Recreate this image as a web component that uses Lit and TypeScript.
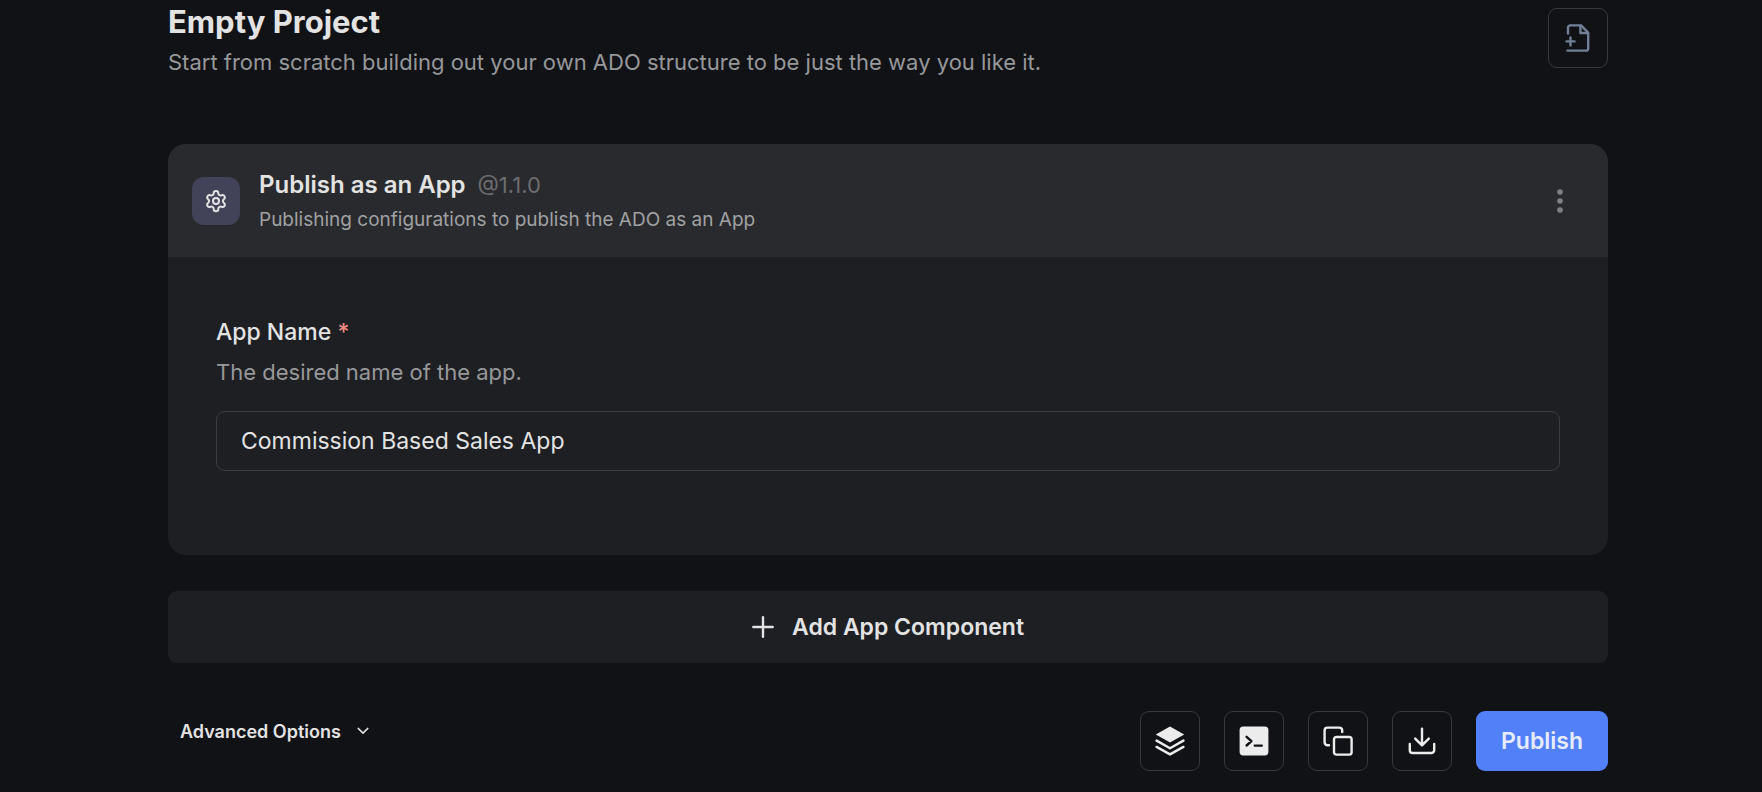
import { LitElement, html, css, svg } from "lit";
import { customElement, state } from "lit/decorators.js";

const filePlusIcon = svg`<svg class="icon slate" viewBox="0 0 30 30" width="30" height="30" aria-hidden="true">
  <path class="bold" d="M5 10.500V4.600A2.200 2.200 0 0 1 7.200 2.400H18L25.200 9.600V25.400A2.200 2.200 0 0 1 23 27.600H4.400" />
  <path class="bold" d="M17.400 2.800V10H24.800" /><path class="bold" d="M7.500 14.400V22.400M3.500 18.400H11.500" />
</svg>`;

const gearIcon = svg`<svg class="icon" viewBox="0 0 24 24" width="24" height="24" aria-hidden="true">
  <circle cx="12" cy="12" r="3" />
  <path d="M9.7 4.2a2.3 2.3 0 0 1 4.6 0 2.3 2.3 0 0 0 3.4 2 2.3 2.3 0 0 1 2.3 3.9 2.3 2.3 0 0 0 0 3.9 2.3 2.3 0 0 1-2.3 3.9 2.3 2.3 0 0 0-3.4 2 2.3 2.3 0 0 1-4.6 0 2.3 2.3 0 0 0-3.4-2A2.3 2.3 0 0 1 4 14a2.3 2.3 0 0 0 0-3.9 2.3 2.3 0 0 1 2.3-3.9 2.3 2.3 0 0 0 3.4-2" />
</svg>`;

const dotsIcon = svg`<svg class="dots" viewBox="0 0 6 24" width="6" height="24" aria-hidden="true">
  <circle cx="3" cy="3" r="2.8" /><circle cx="3" cy="12" r="2.8" /><circle cx="3" cy="21" r="2.8" />
</svg>`;

const plusIcon = svg`<svg class="icon" viewBox="0 0 22 22" width="22" height="22" aria-hidden="true">
  <path class="bold" d="M11 1.300v19.400M1.300 11h19.400" />
</svg>`;

const chevronIcon = svg`<svg class="icon" viewBox="0 0 12 8" width="12" height="8" aria-hidden="true">
  <path class="thin" d="M1.2 1.4 6 6.1l4.8-4.7" />
</svg>`;

const layersIcon = svg`<svg class="icon" viewBox="0 0 30 30" width="30" height="30" aria-hidden="true">
  <path class="solid" d="M15 .6 29.2 8.4 15 16.6.8 8.4Z" />
  <path class="bold" d="M1.600 14.600 15 22.200l13.400-7.600M1.600 20.900 15 28.400l13.400-7.500" />
</svg>`;

const terminalIcon = svg`<svg class="icon" viewBox="0 0 30 30" width="30" height="30" aria-hidden="true">
  <rect class="solid" x=".6" y=".6" width="28.8" height="28.8" rx="3.6" />
  <path class="cut" d="m7.600 10.800 4.800 4.300-4.800 4.400M15.800 19.600h7" />
</svg>`;

const copyIcon = svg`<svg class="icon" viewBox="0 0 30 30" width="30" height="30" aria-hidden="true">
  <rect class="bold" x="11" y="11" width="17.6" height="17.6" rx="2.4" />
  <path class="bold" d="M6 19.200H4.400A2.800 2.800 0 0 1 1.600 16.400V4.400A2.800 2.800 0 0 1 4.400 1.600H16.400A2.800 2.800 0 0 1 19.200 4.400V6" />
</svg>`;

const downloadIcon = svg`<svg class="icon" viewBox="0 0 30 30" width="30" height="30" aria-hidden="true">
  <path class="bold" d="M15 2.600v16.400M8.200 12.600l6.800 6.800 6.800-6.800M2.800 18v6.200a2.800 2.800 0 0 0 2.800 2.800h18.800a2.800 2.800 0 0 0 2.800-2.800V18" />
</svg>`;

@customElement("app-root")
export class AppRoot extends LitElement {
  static styles = css`
    :host {
      display: block;
      min-height: 100vh;
      box-sizing: border-box;
      padding: 4px 154px 20px 168px;
      background: #111216;
      color: #e3e3e3;
      font-family: Inter, "Liberation Sans", sans-serif;
    }
    h1, h2, p { margin: 0; }
    button, input { font: inherit; color: inherit; box-sizing: border-box; }
    button {
      display: flex;
      align-items: center;
      justify-content: center;
      padding: 0;
      border: 0;
      background: none;
      cursor: pointer;
    }
    .icon {
      fill: none;
      stroke: currentColor;
      stroke-width: 2;
      stroke-linecap: round;
      stroke-linejoin: round;
    }
    .slate { color: #718096; }
    .solid { fill: currentColor; stroke: none; }
    .thin { stroke-width: 1.5; }
    .bold { stroke-width: 2.4; }
    .cut { stroke: #111216; stroke-width: 2.4; }
    .top {
      display: flex;
      justify-content: space-between;
      align-items: flex-start;
      margin-bottom: 66px;
    }
    .stack { display: flex; flex-direction: column; gap: 6px; }
    h1 { font-size: 31px; line-height: 36px; font-weight: 700; }
    .muted { color: #97989a; font-size: 22px; line-height: 32px; }
    .square {
      width: 60px;
      height: 60px;
      border: 1px solid #38393c;
      border-radius: 9px;
    }
    .top .square { margin-top: 4px; }
    .card { border-radius: 18px; overflow: hidden; background: #1e1f23; }
    .card-head {
      display: flex;
      align-items: center;
      gap: 19px;
      padding: 24px;
      background: #292a2d;
    }
    .card-head .stack { flex: 1; padding-top: 2px; }
    .badge {
      display: grid;
      place-items: center;
      width: 48px;
      height: 48px;
      border-radius: 12px;
      background: #424358;
    }
    .title { display: flex; gap: 12px; font-size: 24px; line-height: 30px; }
    h2 { font-size: inherit; font-weight: 600; }
    .version { color: #6c6d70; font-size: 22px; }
    .small { color: #a0a1a3; font-size: 19px; line-height: 27px; }
    .menu { width: 48px; height: 48px; }
    .dots { fill: #808184; }
    .card-body { display: flex; flex-direction: column; padding: 60px 48px 84px; }
    label { font-size: 23px; line-height: 30px; font-weight: 500; margin-bottom: 9px; }
    .star { color: #f08a80; }
    input {
      width: 100%;
      height: 60px;
      margin-top: 23px;
      padding: 0 24px;
      border: 1px solid #3c3d41;
      border-radius: 9px;
      background: transparent;
      font-size: 23px;
      outline: none;
    }
    .add {
      gap: 18px;
      width: 100%;
      height: 72px;
      margin: 36px 0 48px;
      border-radius: 9px;
      background: #1e1f23;
      font-size: 23px;
      font-weight: 600;
    }
    .bottom { display: flex; justify-content: space-between; align-items: flex-start; }
    .advanced {
      gap: 16px;
      height: 40px;
      padding: 0 12px;
      font-size: 18px;
      font-weight: 600;
    }
    .actions { display: flex; gap: 24px; }
    .actions .icon { color: #ececec; }
    .publish {
      min-width: 132px;
      height: 60px;
      padding: 0 24px;
      border-radius: 9px;
      background: #5280f8;
      color: #e6ecfe;
      font-size: 23px;
      font-weight: 600;
    }
  `;

  @state() private appName = "Commission Based Sales App";

  private onName(e: Event) {
    this.appName = (e.target as HTMLInputElement).value;
  }

  render() {
    return html`
      <header class="top">
        <div class="stack">
          <h1>Empty Project</h1>
          <p class="muted">Start from scratch building out your own ADO structure to be just the way you like it.</p>
        </div>
        <button class="square" aria-label="Import file">${filePlusIcon}</button>
      </header>

      <section class="card">
        <div class="card-head">
          <span class="badge">${gearIcon}</span>
          <div class="stack">
            <div class="title"><h2>Publish as an App</h2><span class="version">@1.1.0</span></div>
            <p class="small">Publishing configurations to publish the ADO as an App</p>
          </div>
          <button class="menu" aria-label="More options">${dotsIcon}</button>
        </div>
        <div class="card-body">
          <label for="app-name">App Name <span class="star">*</span></label>
          <p class="muted" id="app-name-help">The desired name of the app.</p>
          <input id="app-name" type="text" required aria-describedby="app-name-help"
            .value=${this.appName} @input=${this.onName} />
        </div>
      </section>

      <button class="add">${plusIcon}<span>Add App Component</span></button>

      <footer class="bottom">
        <button class="advanced">Advanced Options ${chevronIcon}</button>
        <div class="actions">
          <button class="square" aria-label="Templates">${layersIcon}</button>
          <button class="square" aria-label="Command line">${terminalIcon}</button>
          <button class="square" aria-label="Copy">${copyIcon}</button>
          <button class="square" aria-label="Download">${downloadIcon}</button>
          <button class="publish">Publish</button>
        </div>
      </footer>
    `;
  }
}
